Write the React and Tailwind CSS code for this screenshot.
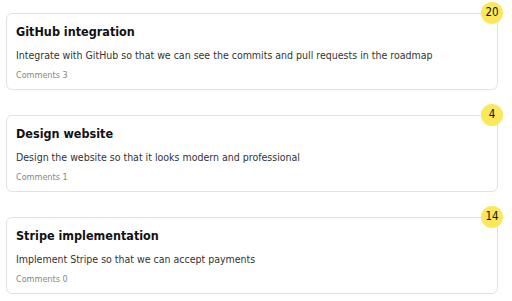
const items = [
  { title: "GitHub integration", desc: "Integrate with GitHub so that we can see the commits and pull requests in the roadmap", comments: 3, votes: 20 },
  { title: "Design website", desc: "Design the website so that it looks modern and professional", comments: 1, votes: 4 },
  { title: "Stripe implementation", desc: "Implement Stripe so that we can accept payments", comments: 0, votes: 14 },
];

export default function App() {
  return (
    <div className="bg-white w-[512px] h-[301px] pt-[13px] pl-[6px] pr-[14px] flex flex-col gap-[25px]" style={{ fontFamily: '"DejaVu Sans Condensed", "DejaVu Sans", sans-serif' }}>
      {items.map((it) => (
        <div key={it.title} className="relative border border-[#e2e2e2] rounded-[6px] pt-[10px] pb-[8px] px-[9px]">
          <div className="text-[12.5px] font-bold leading-[16px] text-[#111]">{it.title}</div>
          <div className="mt-[8px] text-[10.5px] leading-[14px] text-[#333]">{it.desc}</div>
          <div className="mt-[7px] text-[9px] leading-[12px] text-[#888]">Comments {it.comments}</div>
          <div className="absolute top-[-12px] right-[-6px] w-[22px] h-[22px] rounded-full bg-[#fbe75a] flex items-center justify-center text-[11.5px] text-[#111]">{it.votes}</div>
        </div>
      ))}
    </div>
  );
}
